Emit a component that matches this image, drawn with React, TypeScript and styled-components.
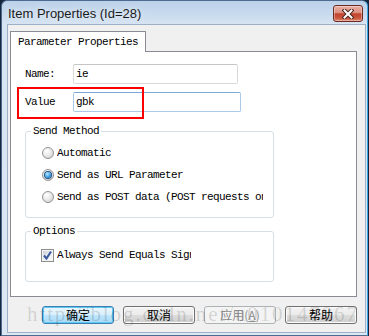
import styled, { createGlobalStyle } from 'styled-components';

const mono = `"Liberation Mono", "DejaVu Sans Mono", monospace`;
const cjk = `"Noto Sans CJK SC", "Liberation Sans", sans-serif`;

const GlobalStyle = createGlobalStyle`
  html, body {
    margin: 0;
    padding: 0;
  }
  body {
    width: 369px;
    height: 336px;
    overflow: hidden;
    background: #15253c;
  }
`;

const Window = styled.div`
  box-sizing: border-box;
  width: 367px;
  height: 336px;
  margin-left: 1px;
  display: flex;
  flex-direction: column;
  border: 1px solid #4d6b8f;
  border-right-color: #38a6e4;
  border-radius: 6px 6px 0 0;
  background: linear-gradient(#bcd1e9 0px, #c9dbee 14px, #d7e4f2 23px, #dce7f3 100%);
`;

const TitleBar = styled.div`
  box-sizing: border-box;
  height: 23px;
  padding: 4px 4px 0 6px;
  display: flex;
  justify-content: space-between;
  align-items: flex-start;
`;

const Title = styled.span`
  font: 13px/18px "Liberation Sans", Arial, sans-serif;
  color: #1b1b1b;
  text-shadow: 0 0 6px rgba(255, 255, 255, 0.9);
`;

const CloseButton = styled.div`
  box-sizing: border-box;
  width: 30px;
  height: 17px;
  border: 1px solid #6b2b24;
  border-radius: 3px;
  background: linear-gradient(#eab0a3 0%, #dc8f80 45%, #c3432c 52%, #c9553e 80%, #e18c70 100%);
  box-shadow: inset 0 0 0 1px rgba(255, 255, 255, 0.35);
  display: flex;
  align-items: center;
  justify-content: center;
`;

const Client = styled.div`
  position: relative;
  flex: 1;
  margin: 0 1px 2px 5px;
  padding: 6px 7px 0 2px;
  border: 1px solid #9fb0c4;
  background: #f0f0f0;
  display: flex;
  flex-direction: column;
`;

const TabStrip = styled.div`
  display: flex;
`;

const Tab = styled.div`
  box-sizing: border-box;
  width: 136px;
  height: 21px;
  margin-bottom: -1px;
  padding-left: 7px;
  position: relative;
  z-index: 1;
  border: 1px solid #898c95;
  border-bottom: none;
  background: #fff;
  font: 11px/20px ${mono};
  letter-spacing: -0.6px;
  color: #000;
`;

const Panel = styled.div`
  position: relative;
  box-sizing: border-box;
  width: 347px;
  height: 246px;
  padding: 12px 0 0 14px;
  border: 1px solid #898c95;
  background: #fff;
  font: 11px ${mono};
  letter-spacing: -0.6px;
  color: #000;
`;

const Fields = styled.div`
  display: flex;
  flex-direction: column;
  gap: 8px;
`;

const FieldRow = styled.div`
  display: flex;
  align-items: center;
  height: 20px;
`;

const FieldLabel = styled.span`
  width: 48px;
`;

const TextBox = styled.input<{ $width: number; $focused?: boolean }>`
  box-sizing: border-box;
  width: ${({ $width }) => $width}px;
  height: 20px;
  margin: 0;
  padding: 0 0 0 2px;
  border: 1px solid ${({ $focused }) => ($focused ? '#a9cbe9' : '#dadada')};
  border-top-color: ${({ $focused }) => ($focused ? '#7ba9d6' : '#c6c6c6')};
  border-radius: 2px;
  outline: none;
  background: #fff;
  font: 11px ${mono};
  letter-spacing: -0.6px;
  color: #000;
`;

const Highlight = styled.div`
  position: absolute;
  left: 6px;
  top: 35px;
  width: 127px;
  height: 32px;
  box-sizing: border-box;
  border: 2px solid #ff0000;
  pointer-events: none;
`;

const Group = styled.fieldset<{ $top: number }>`
  box-sizing: border-box;
  width: 249px;
  min-inline-size: 0;
  margin: ${({ $top }) => $top}px 0 0;
  padding: 0;
  border: 1px solid #d5dfe5;
  border-radius: 3px;
`;

const Legend = styled.legend`
  margin-left: 5px;
  padding: 0 2px;
  line-height: 14px;
`;

const OptionList = styled.div<{ $pad: string }>`
  display: flex;
  flex-direction: column;
  padding: ${({ $pad }) => $pad};
`;

const OptionRow = styled.div`
  display: flex;
  align-items: center;
  gap: 3px;
  height: 22px;
`;

const OptionText = styled.span<{ $clip?: number }>`
  white-space: nowrap;
  overflow: hidden;
  ${({ $clip }) => ($clip ? `width: ${$clip}px;` : '')}
`;

const Radio = styled.span<{ $checked?: boolean }>`
  box-sizing: border-box;
  width: 12px;
  height: 12px;
  flex: none;
  border-radius: 50%;
  border: 1px solid #939393;
  background: radial-gradient(circle at 35% 30%, #ffffff 0%, #ebebeb 45%, #c7c7c7 100%);
  display: flex;
  align-items: center;
  justify-content: center;

  &::after {
    content: '';
    display: ${({ $checked }) => ($checked ? 'block' : 'none')};
    width: 6px;
    height: 6px;
    border-radius: 50%;
    background: radial-gradient(circle at 40% 35%, #bfe9ff 0%, #3a9de6 55%, #0c5aa8 100%);
    box-shadow: 0 0 0 1px #1f4f80;
  }
`;

const CheckBox = styled.span`
  box-sizing: border-box;
  width: 13px;
  height: 13px;
  flex: none;
  border: 1px solid #8e8f8f;
  background: linear-gradient(135deg, #c9cdd3 0%, #eef0f2 60%, #fafafa 100%);
  box-shadow: inset 0 0 0 1px #f4f4f4;
  display: flex;
  align-items: center;
  justify-content: center;
`;

const ButtonRow = styled.div`
  width: 347px;
  margin-top: 9px;
  display: flex;
  justify-content: flex-end;
  gap: 9px;
`;

const Button = styled.div<{ $variant?: 'default' | 'disabled' }>`
  box-sizing: border-box;
  width: 72px;
  height: 18px;
  border-radius: 3px;
  display: flex;
  align-items: center;
  justify-content: center;
  font: 12px/16px ${cjk};
  color: #000;
  border: 1px solid #707070;
  background: linear-gradient(#f3f3f3 0%, #ebebeb 50%, #dddddd 51%, #cfcfcf 100%);
  box-shadow: inset 0 0 0 1px #fbfbfb;

  ${({ $variant }) =>
    $variant === 'default' &&
    `
    border-color: #3c7fb1;
    background: linear-gradient(#eaf6fd 0%, #d9f0fc 50%, #bee6fd 51%, #a7d9f5 100%);
    box-shadow: inset 0 0 0 1px #5fc8f5;
  `}

  ${({ $variant }) =>
    $variant === 'disabled' &&
    `
    border-color: #adb2b5;
    background: #f4f4f4;
    box-shadow: none;
    color: #8d8d8d;
  `}
`;

const Watermark = styled.div`
  position: absolute;
  left: 19px;
  top: 279px;
  font: 21px/21px "Liberation Serif", "Times New Roman", serif;
  letter-spacing: 1.9px;
  white-space: nowrap;
  color: rgba(0, 0, 0, 0.15);
  pointer-events: none;
`;

const CloseIcon = () => (
  <svg width="12" height="10" viewBox="0 0 12 10">
    <path d="M2.5 1.5 L9.5 8.5 M9.5 1.5 L2.5 8.5" stroke="#4a2420" strokeWidth="4" strokeLinecap="square" />
    <path d="M2.5 1.5 L9.5 8.5 M9.5 1.5 L2.5 8.5" stroke="#ffffff" strokeWidth="2" strokeLinecap="square" />
  </svg>
);

const CheckMark = () => (
  <svg width="11" height="11" viewBox="0 0 11 11">
    <path d="M2 5.5 L4.5 8.5 L9 1.5" fill="none" stroke="#3a58a0" strokeWidth="2" />
  </svg>
);

export default function App() {
  return (
    <>
      <GlobalStyle />
      <Window>
        <TitleBar>
          <Title>Item Properties (Id=28)</Title>
          <CloseButton>
            <CloseIcon />
          </CloseButton>
        </TitleBar>
        <Client>
          <TabStrip>
            <Tab>Parameter Properties</Tab>
          </TabStrip>
          <Panel>
            <Fields>
              <FieldRow>
                <FieldLabel>Name:</FieldLabel>
                <TextBox $width={165} defaultValue="ie" readOnly />
              </FieldRow>
              <FieldRow>
                <FieldLabel>Value</FieldLabel>
                <TextBox $width={168} $focused defaultValue="gbk" readOnly />
              </FieldRow>
            </Fields>
            <Highlight />
            <Group $top={12}>
              <Legend>Send Method</Legend>
              <OptionList $pad="4px 0 9px 16px">
                <OptionRow>
                  <Radio />
                  <OptionText>Automatic</OptionText>
                </OptionRow>
                <OptionRow>
                  <Radio $checked />
                  <OptionText>Send as URL Parameter</OptionText>
                </OptionRow>
                <OptionRow>
                  <Radio />
                  <OptionText $clip={206}>Send as POST data (POST requests only)</OptionText>
                </OptionRow>
              </OptionList>
            </Group>
            <Group $top={6}>
              <Legend>Options</Legend>
              <OptionList $pad="6px 0 15px 15px">
                <OptionRow>
                  <CheckBox>
                    <CheckMark />
                  </CheckBox>
                  <OptionText $clip={134}>Always Send Equals Sign</OptionText>
                </OptionRow>
              </OptionList>
            </Group>
          </Panel>
          <ButtonRow>
            <Button $variant="default">确定</Button>
            <Button>取消</Button>
            <Button $variant="disabled">
              应用(<u>A</u>)
            </Button>
            <Button>帮助</Button>
          </ButtonRow>
          <Watermark>http://blog.csdn.net/u010147867</Watermark>
        </Client>
      </Window>
    </>
  );
}
